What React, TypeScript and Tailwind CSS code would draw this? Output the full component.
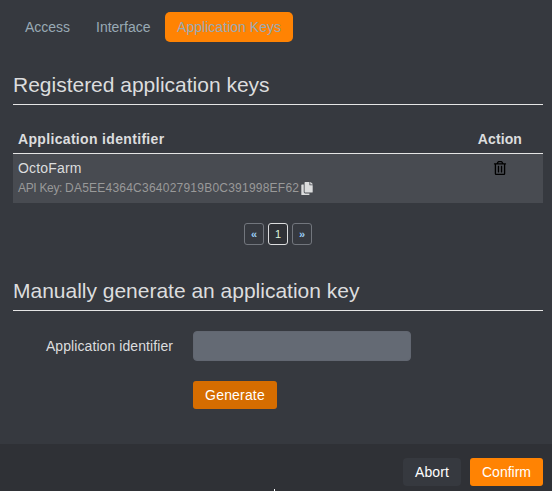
import { FaCopy, FaRegTrashAlt } from "react-icons/fa";

function SectionTitle({ children }: { children: string }) {
  return (
    <h2 className="h-10 border-b border-[#e5e5e5] text-[21px] leading-[40px] tracking-[-0.01px] text-[#dcddde]">
      {children}
    </h2>
  );
}

const pageButton = "flex h-[22px] w-5 items-center justify-center rounded-[3px] border text-[11px] leading-none";

export default function App() {
  return (
    <div className="flex h-[491px] w-[552px] flex-col overflow-hidden bg-[#36393f] font-['Liberation_Sans',Arial,sans-serif] text-[14px] leading-5 text-[#dcddde]">
      <main className="h-[444px] pr-[9px] pl-[13px] pt-3">
        <nav className="flex gap-[2px] text-[#99aab5]">
          <a className="h-[30px] w-[68px] rounded-[5px] pt-[5px] pl-3">Access</a>
          <a className="h-[30px] w-[80px] rounded-[5px] pt-[5px] pl-[13px]">Interface</a>
          <a className="h-[30px] w-[128px] rounded-[5px] bg-[#ff8303] pt-[5px] pl-3 tracking-[0.04px]">Application Keys</a>
        </nav>

        <section className="mt-[23px]">
          <SectionTitle>Registered application keys</SectionTitle>
          <div className="mt-5 flex h-[29px] items-center justify-between border-b border-[#e5e5e5] pr-[21px] pl-[5px] font-bold">
            <span className="tracking-[0.33px]">Application identifier</span>
            <span className="tracking-[0.1px]">Action</span>
          </div>
          <div className="flex h-[49px] justify-between bg-[#484b51] pr-9 pl-[5px] pt-1">
            <div>
              <div className="tracking-[0.17px]">OctoFarm</div>
              <div className="flex items-center text-[12px] text-[#999999]">
                <span className="w-[47px] whitespace-nowrap tracking-[-0.32px]">API Key:</span>
                <span className="w-[236px] whitespace-nowrap tracking-[0.23px]">DA5EE4364C364027919B0C391998EF62</span>
                <FaCopy className="h-[13px] w-3 text-[#dcddde]" />
              </div>
            </div>
            <FaRegTrashAlt className="mt-[3px] size-[14px] text-black" />
          </div>
        </section>

        <div className="mt-5 flex justify-center gap-1 text-[#99ccf5]">
          <button className={`${pageButton} border-[#72767d] font-bold`}>«</button>
          <button className={`${pageButton} border-[#dcddde] bg-[#2f3136] text-[#dcf5dc]`}>1</button>
          <button className={`${pageButton} border-[#72767d] font-bold`}>»</button>
        </div>

        <section className="mt-[26px]">
          <SectionTitle>Manually generate an application key</SectionTitle>
          <div className="mt-5 flex gap-5">
            <label className="w-40 pt-[5px] text-right tracking-[0.08px]">Application identifier</label>
            <input className="h-[30px] w-[218px] rounded-[4px] border border-[#626771] bg-[#646a74]" />
          </div>
          <button className="mt-5 ml-[180px] h-7 w-[84px] rounded-[3px] bg-[#d66d00] tracking-[0.18px] text-white">Generate</button>
        </section>
      </main>

      <footer className="relative flex h-[47px] justify-end gap-[9px] bg-[#2f3136] pr-[9px] pt-[14px] text-white">
        <button className="h-7 w-[58px] rounded-[4px] bg-[#36393f] tracking-[0.15px]">Abort</button>
        <button className="h-7 w-[73px] rounded-[3px] bg-[#ff8303]">Confirm</button>
        <span className="absolute bottom-0 left-[274px] h-[2px] w-px bg-white" />
      </footer>
    </div>
  );
}
